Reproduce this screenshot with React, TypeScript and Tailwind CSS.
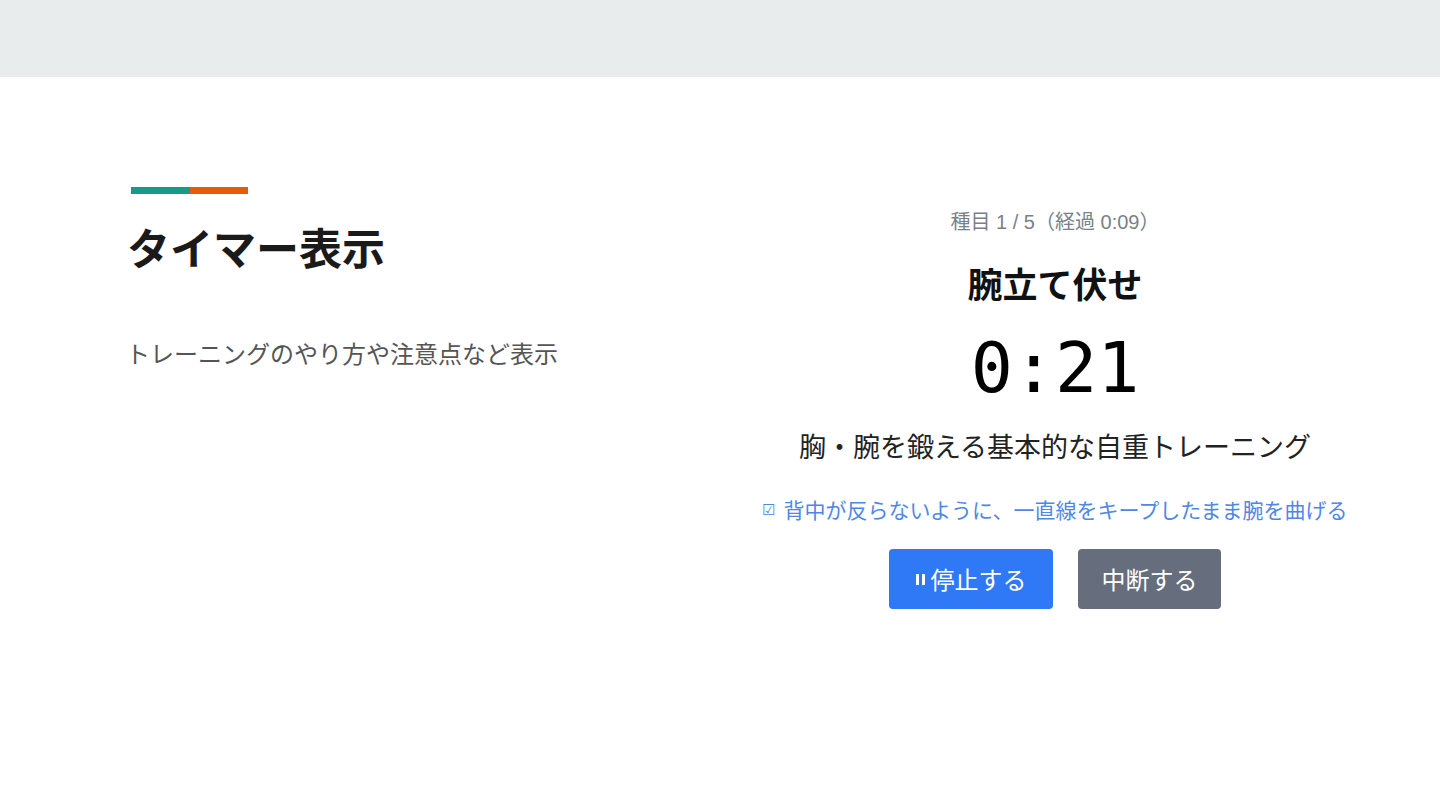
const jp = "font-['Noto_Sans_CJK_JP',sans-serif]"

export default function App() {
  return (
    <div className={`min-h-[810px] w-[1440px] bg-white ${jp}`}>
      <div className="h-[77px] bg-[#e8ecec]" />
      <div className="flex">
        {/* left: slide heading */}
        <div className="w-[670px] pl-[131px] pt-[110px]">
          <div className="flex h-[7px] w-[117px]">
            <div className="w-[59px] bg-[#169a89]" />
            <div className="flex-1 bg-[#e75b0b]" />
          </div>
          <h1 className="-ml-[4px] mt-[26px] text-[43px] font-bold leading-[52px] text-[#1a1a1a]">
            タイマー表示
          </h1>
          <p className="-ml-[5px] mt-[66px] text-[24px] leading-[30px] text-[#555555]">
            トレーニングのやり方や注意点など表示
          </p>
        </div>

        {/* right: timer screen */}
        <div className="flex flex-1 flex-col items-center pt-[132px]">
          <div className="font-['Liberation_Sans','Noto_Sans_CJK_JP',sans-serif] text-[20px] leading-[26px] text-[#7a7f88]">
            種目 1 / 5（経過 0:09）
          </div>
          <div className="mt-[27px] text-[35px] font-bold leading-[42px] text-[#111111]">
            腕立て伏せ
          </div>
          <div className="mt-[24px] font-['DejaVu_Sans_Mono',monospace] text-[70px] leading-[80px] text-black">
            0:21
          </div>
          <div className="mt-[21px] text-[27px] leading-[34px] text-[#222222]">
            胸・腕を鍛える基本的な自重トレーニング
          </div>
          <div className="mt-[32px] flex items-center gap-[8px] text-[21px] leading-[28px] text-[#4f87e6]">
            <span className="text-[15px]">☑</span>
            <span>背中が反らないように、一直線をキープしたまま腕を曲げる</span>
          </div>
          <div className="mt-[26px] flex gap-[25px]">
            <button className="flex h-[60px] w-[164px] items-center justify-center gap-[6px] rounded-[4px] bg-[#2f78f6] text-[24px] text-white">
              <span className="flex gap-[3px]">
                <span className="h-[11px] w-[3px] bg-white" />
                <span className="h-[11px] w-[3px] bg-white" />
              </span>
              停止する
            </button>
            <button className="h-[60px] w-[143px] rounded-[4px] bg-[#666d7c] text-[24px] text-white">
              中断する
            </button>
          </div>
        </div>
      </div>
    </div>
  )
}
